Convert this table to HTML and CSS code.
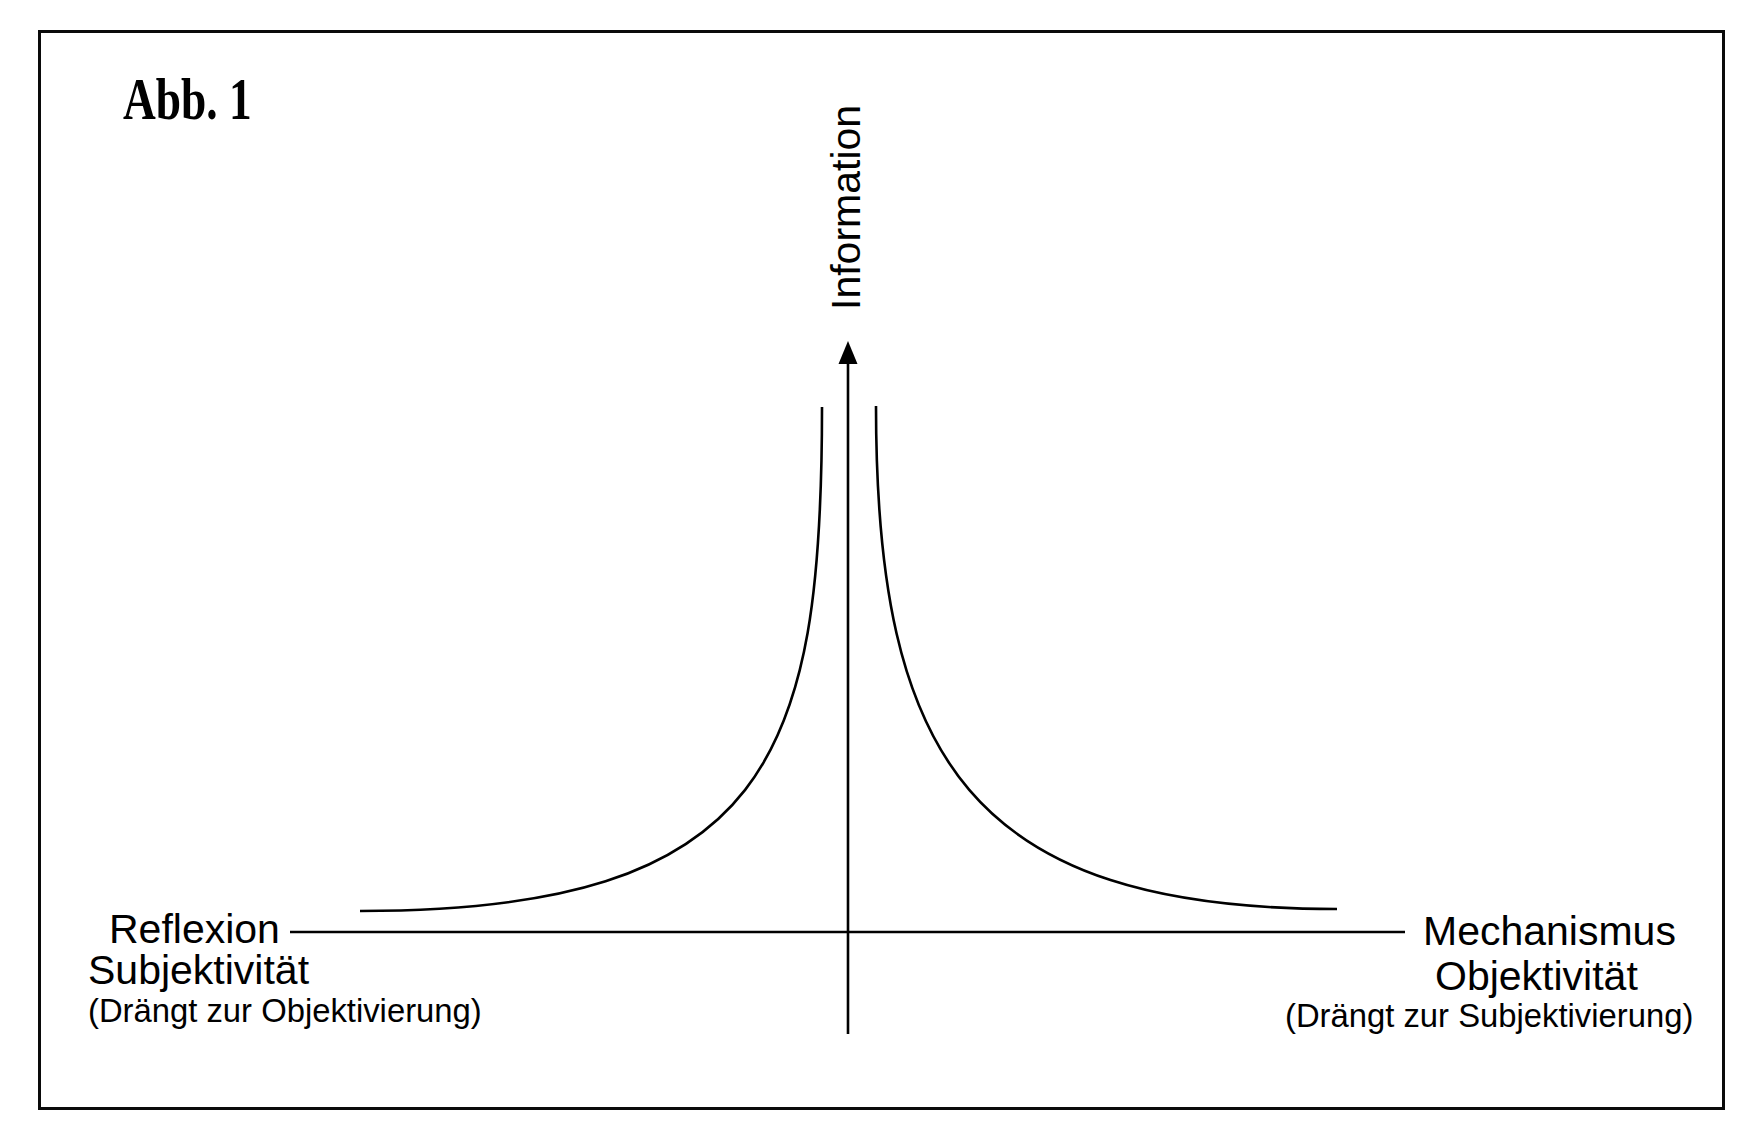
FILE: index.html
```html
<!DOCTYPE html>
<html lang="de">
<head>
<meta charset="utf-8">
<title>Abb. 1</title>
<link rel="stylesheet" href="styles.css">
</head>
<body>
<div class="frame">
  <h1 class="fig-title">Abb. 1</h1>
  <svg class="diagram" width="1681" height="1074" viewBox="41 33 1681 1074" xmlns="http://www.w3.org/2000/svg">
    <g class="strokes">
      <line x1="290" y1="932" x2="1405" y2="932"/>
      <line x1="848" y1="360" x2="848" y2="1034"/>
      <path d="M360 911 C771 911 822 756 822 407"/>
      <path d="M1337 909 C971 909 876 759 876 406"/>
    </g>
    <polygon class="arrowhead" points="848,341 838.5,364 857.5,364"/>
    <g class="labels">
      <text class="lbl" transform="translate(860 310) rotate(-90)">Information</text>
      <text class="lbl" x="109" y="943">Reflexion</text>
      <text class="lbl" x="88" y="984">Subjektivität</text>
      <text class="lbl small" x="88" y="1022">(Drängt zur Objektivierung)</text>
      <text class="lbl" x="1423" y="945">Mechanismus</text>
      <text class="lbl" x="1435" y="990">Objektivität</text>
      <text class="lbl small" x="1285" y="1027">(Drängt zur Subjektivierung)</text>
    </g>
  </svg>
</div>
</body>
</html>
```

FILE: styles.css
```css
html, body {
  margin: 0;
  padding: 0;
  background: #ffffff;
}

.frame {
  position: relative;
  width: 1681px;
  height: 1074px;
  margin: 30px 0 0 38px;
  border: 3px solid #0a0a0a;
  background: #ffffff;
}

.fig-title {
  display: inline-block;
  margin: 37px 0 0 82px;
  font-family: "Liberation Serif", "Times New Roman", serif;
  font-weight: bold;
  font-size: 59px;
  line-height: 1;
  color: #000;
  transform: scaleX(0.77);
  transform-origin: left top;
  white-space: nowrap;
}

.diagram {
  position: absolute;
  left: 0;
  top: 0;
  display: block;
}

.strokes line,
.strokes path {
  stroke: #000;
  stroke-width: 2.6;
  fill: none;
}

.arrowhead {
  fill: #000;
}

.lbl {
  font-family: "Liberation Sans", Arial, sans-serif;
  font-size: 41px;
  fill: #000;
}

.lbl.small {
  font-size: 32.8px;
}
```
